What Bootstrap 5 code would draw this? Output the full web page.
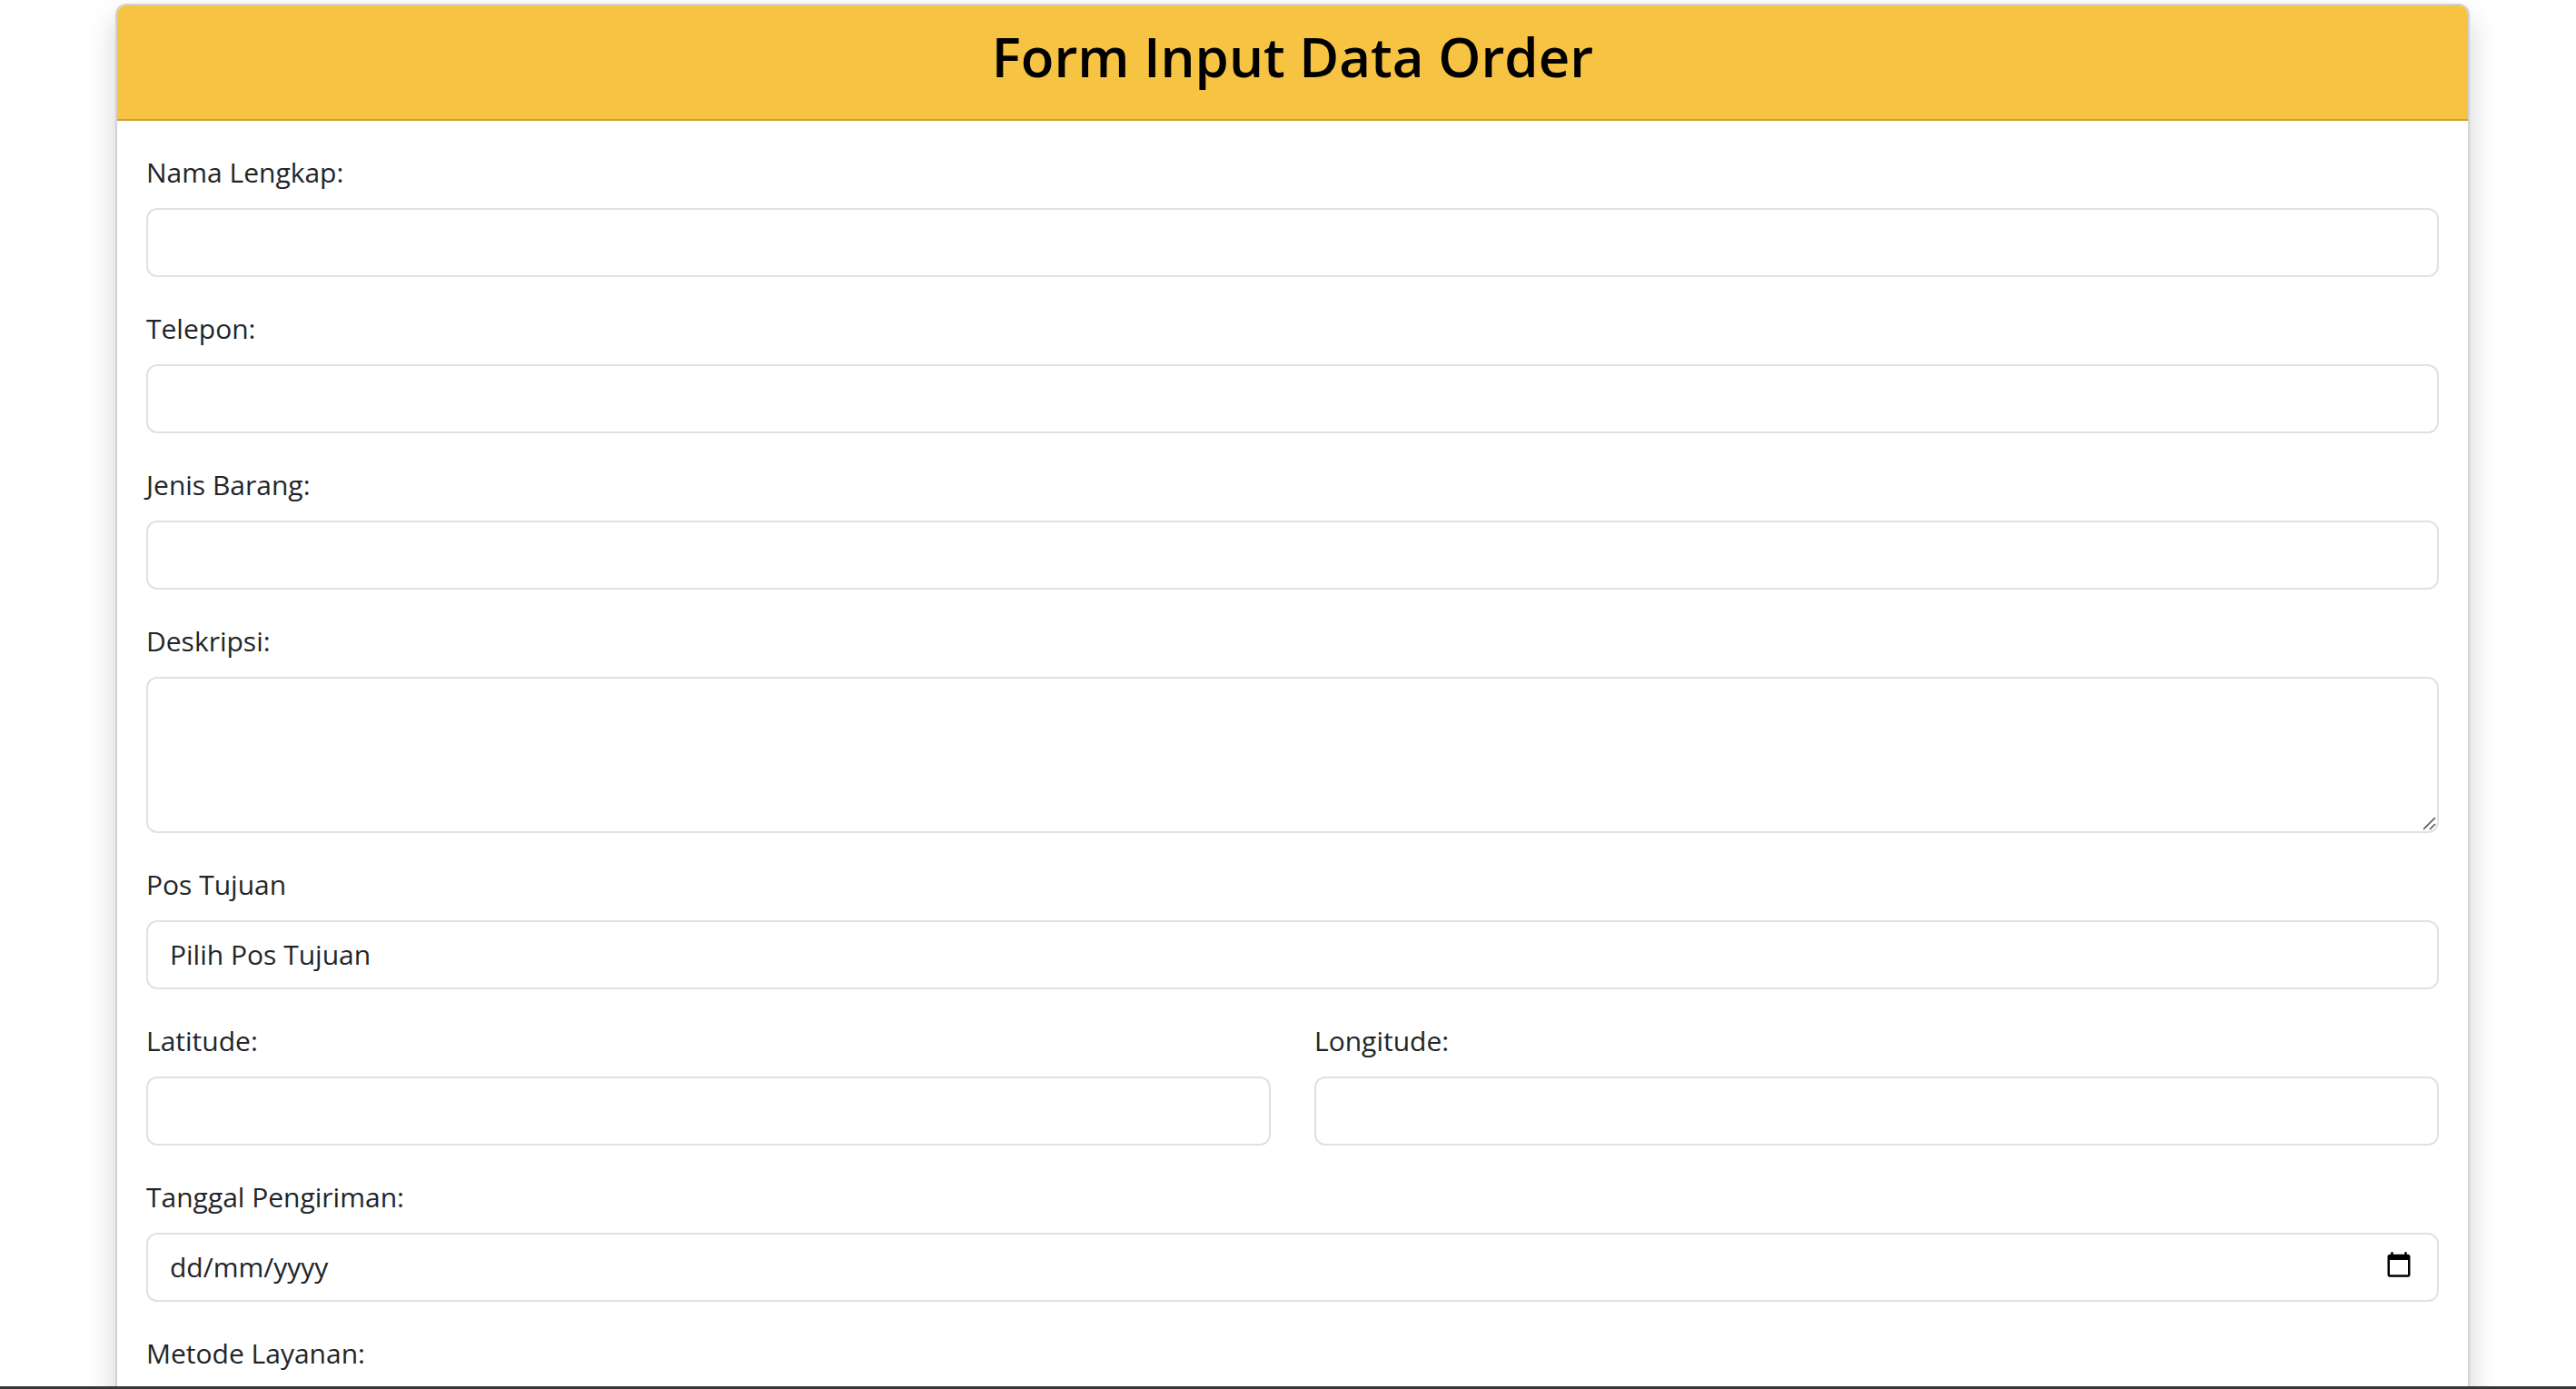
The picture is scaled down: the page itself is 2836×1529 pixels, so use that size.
<!DOCTYPE html>
<html lang="id">
<head>
<meta charset="utf-8">
<meta name="viewport" content="width=device-width, initial-scale=1">
<title>Form Input Data Order</title>
<link href="https://cdn.jsdelivr.net/npm/bootstrap@5.3.0/dist/css/bootstrap.min.css" rel="stylesheet">
<style>
  :root { font-size: 32px; }
  body {
    --bs-body-font-family: "Open Sans", "Noto Sans", sans-serif;
    --bs-body-font-size: 30px;
    --bs-border-width: 2px;
    --bs-border-radius: 12px;
    line-height: 48px;
  }
  .page-scroll { scrollbar-width: none; padding: 4px 0 0 10px; }
  .page-scroll::-webkit-scrollbar { display: none; }
  .order-container { max-width: 2640px; }
  .order-card {
    --bs-card-border-width: 2px;
    --bs-card-border-radius: 12px;
    --bs-card-inner-border-radius: 10px;
    --bs-box-shadow: 0 16px 32px rgba(0, 0, 0, .18);
    box-shadow: 0 16px 32px rgba(0, 0, 0, .18);
  }
  .order-header { background-color: #f6c343; color: #000; }
  .order-header h2 { font-size: 60px; line-height: 81px; font-weight: 600; margin-bottom: 12px; }
  .form-label { line-height: 50px; margin-bottom: 14px; }
  .form-control { font-size: 30px; line-height: 48px; border-width: 2px; border-radius: 12px; }
  select.form-control, input.form-control { height: 76px; }
  textarea.form-control { display: block; height: 172px; }
  textarea.form-control::-webkit-resizer {
    background: url("data:image/svg+xml,%3Csvg xmlns='http://www.w3.org/2000/svg' width='15' height='15' viewBox='0 0 15 15'%3E%3Cpath d='M0 13L13 0M7 13L13 7' stroke='%23555' stroke-width='1.6'/%3E%3C/svg%3E") no-repeat 0 0;
  }
  /* day-first hint while the date is empty */
  input[type="date"].form-control { display: flex; align-items: center; }
  .date-empty::before { content: attr(data-format); flex: 1; }
  .date-empty::-webkit-datetime-edit { display: none; }
  .form-control::-webkit-calendar-picker-indicator { width: 32px; height: 32px; padding: 0; margin: 0 2px 4px auto; }
  .window-edge { height: 3px; background: #3a3638; }
</style>
</head>
<body>
<div class="d-flex flex-column vh-100">
  <main class="page-scroll flex-grow-1 overflow-auto">
    <div class="container order-container">
      <div class="card order-card">
        <div class="card-header order-header text-center">
          <h2>Form Input Data Order</h2>
        </div>
        <form class="card-body">
          <div class="mb-3">
            <label for="nama" class="form-label">Nama Lengkap:</label>
            <input type="text" class="form-control" id="nama">
          </div>
          <div class="mb-3">
            <label for="telepon" class="form-label">Telepon:</label>
            <input type="tel" class="form-control" id="telepon">
          </div>
          <div class="mb-3">
            <label for="jenis" class="form-label">Jenis Barang:</label>
            <input type="text" class="form-control" id="jenis">
          </div>
          <div class="mb-3">
            <label for="deskripsi" class="form-label">Deskripsi:</label>
            <textarea class="form-control" id="deskripsi" rows="3"></textarea>
          </div>
          <div class="mb-3">
            <label for="pos" class="form-label">Pos Tujuan</label>
            <select class="form-control" id="pos">
              <option selected>Pilih Pos Tujuan</option>
            </select>
          </div>
          <div class="row mb-3">
            <div class="col">
              <label for="latitude" class="form-label">Latitude:</label>
              <input type="text" class="form-control" id="latitude">
            </div>
            <div class="col">
              <label for="longitude" class="form-label">Longitude:</label>
              <input type="text" class="form-control" id="longitude">
            </div>
          </div>
          <div class="mb-3">
            <label for="tanggal" class="form-label">Tanggal Pengiriman:</label>
            <input type="date" class="form-control date-empty" id="tanggal" data-format="dd/mm/yyyy">
          </div>
          <div class="mb-3">
            <label for="metode" class="form-label">Metode Layanan:</label>
            <select class="form-control" id="metode"></select>
          </div>
        </form>
      </div>
    </div>
  </main>
  <div class="window-edge flex-shrink-0"></div>
</div>
<script src="https://cdn.jsdelivr.net/npm/bootstrap@5.3.0/dist/js/bootstrap.bundle.min.js"></script>
<script>
  const tanggal = document.getElementById('tanggal');
  tanggal.addEventListener('input', () => tanggal.classList.toggle('date-empty', !tanggal.value));
</script>
</body>
</html>
